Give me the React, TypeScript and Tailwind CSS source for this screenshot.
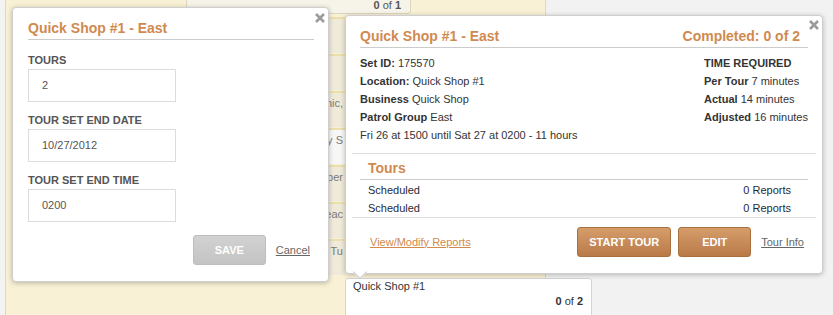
import React from "react";

const orange = "text-[#d08a50]";

const CloseX = () => (
  <svg width="10" height="10" viewBox="0 0 10 10">
    <path d="M1 1 L9 9 M9 1 L1 9" stroke="#9b9b9b" strokeWidth="2.6" strokeLinecap="butt" />
  </svg>
);

// blocks in the hidden calendar column, only their right edge shows
const blocks = [
  { top: 17, text: "", white: false },
  { top: 54, text: "", white: false },
  { top: 91, text: "Mechanic,", white: false },
  { top: 128, text: "Daily S", white: true },
  { top: 165, text: "Super", white: false },
  { top: 202, text: "Beac", white: false },
  { top: 239, text: "Tu", white: false },
];

const Field = ({ label, value, first }: { label: string; value: string; first?: boolean }) => (
  <div className={first ? "mt-[13px]" : "mt-[11px]"}>
    <div className="text-[11px] leading-[14px] font-bold text-[#555] mb-[2px]">{label}</div>
    <div className="w-[148px] h-[33px] border border-[#dcdcdc] bg-white flex items-center pl-[13px] text-[11px] text-[#555]">
      {value}
    </div>
  </div>
);

const InfoRow = ({ label, value }: { label: string; value: string }) => (
  <div className="h-[18px] leading-[18px] whitespace-nowrap">
    <span className="font-bold">{label}</span> {value}
  </div>
);

export default function App() {
  return (
    <div className="relative w-[833px] h-[315px] overflow-hidden bg-[#f2f2f2] font-['Liberation_Sans',Arial,sans-serif] text-[#333]">
      {/* calendar background */}
      <div className="flex h-full">
        <div className="w-[6px] h-full bg-[#f3f3f1] border-r border-[#f0d98c]" />
        <div className="relative w-[540px] h-full bg-[#f9f1d5] border-r border-[#f0d98c]">
          <div className="absolute left-[180px] top-[-20px] w-[225px] h-[34px] bg-[#f6f3e8] border border-[#dcd6c0] rounded-[3px] flex items-end justify-end pr-[9px] pb-[1px] text-[11px] leading-[14px] text-[#555]">
            <span>
              <b>0</b> of <b>1</b>
            </span>
          </div>
          {blocks.map((b) => (
            <div
              key={b.top}
              className={`absolute left-[184px] w-[155px] h-[36px] border-t-2 border-[#ebdfb0] flex justify-end overflow-hidden pr-[2px] pt-[3px] text-[11px] leading-[14px] text-[#7a7a7a] ${
                b.white ? "bg-[#f7f7f5]" : "bg-[#efead9]"
              }`}
              style={{ top: b.top }}
            >
              <span className="whitespace-nowrap">{b.text}</span>
            </div>
          ))}
        </div>
        <div className="flex-1" />
      </div>

      {/* event card below the popover */}
      <div className="absolute left-[345px] top-[278px] w-[247px] h-[50px] bg-white border border-[#d4d4d4] rounded-[3px] px-[7px] text-[11px] leading-[15px] text-[#333]">
        <div>Quick Shop #1</div>
        <div className="text-right pr-[1px]">
          <b>0</b> of <b>2</b>
        </div>
      </div>

      {/* edit dialog */}
      <div className="absolute left-[12px] top-[7px] w-[317px] h-[275px] bg-white border border-[#cfcfcf] rounded-[4px] shadow-[0_1px_5px_rgba(0,0,0,0.25)]">
        <div className="absolute left-[302px] top-[5px]">
          <CloseX />
        </div>
        <div className="pl-[15px] pr-[14px]">
          <div className={`pt-[9px] leading-[22px] text-[14px] font-bold ${orange} border-b border-[#cccccc]`}>
            Quick Shop #1 - East
          </div>
          <Field label="TOURS" value="2" first />
          <Field label="TOUR SET END DATE" value="10/27/2012" />
          <Field label="TOUR SET END TIME" value="0200" />
          <div className="flex justify-end items-center mt-[13px] pr-[4px]">
            <div className="w-[73px] h-[30px] rounded-[3px] border border-[#bdbdbd] bg-gradient-to-b from-[#d2d2d2] to-[#c4c4c4] flex items-center justify-center text-white text-[11px] font-bold">
              SAVE
            </div>
            <span className="ml-[10px] text-[11px] text-[#666] underline">Cancel</span>
          </div>
        </div>
      </div>

      {/* detail popover */}
      <div className="absolute left-[345px] top-[15px] w-[478px] h-[259px] z-10 bg-white border border-[#cfcfcf] rounded-[4px] shadow-[0_1px_5px_rgba(0,0,0,0.25)]">
        <div className="absolute left-[463px] top-[4px]">
          <CloseX />
        </div>
        <div className="absolute left-[9px] bottom-[-4px] w-[10px] h-[10px] rotate-45 bg-white border-r border-b border-[#cfcfcf]" />

        <div className="px-[14px]">
          <div className={`flex justify-between pt-[9px] leading-[22px] text-[14px] font-bold ${orange} border-b border-[#cccccc]`}>
            <span>Quick Shop #1 - East</span>
            <span className="pr-[8px]">Completed: 0 of 2</span>
          </div>
          <div className="flex pt-[6px] pb-[9px] text-[11px]">
            <div className="flex-1">
              <InfoRow label="Set ID:" value="175570" />
              <InfoRow label="Location:" value="Quick Shop #1" />
              <InfoRow label="Business" value="Quick Shop" />
              <InfoRow label="Patrol Group" value="East" />
              <div className="h-[18px] leading-[18px]">Fri 26 at 1500 until Sat 27 at 0200 - 11 hours</div>
            </div>
            <div className="w-[104px]">
              <div className="h-[18px] leading-[18px] font-bold">TIME REQUIRED</div>
              <InfoRow label="Per Tour" value="7 minutes" />
              <InfoRow label="Actual" value="14 minutes" />
              <InfoRow label="Adjusted" value="16 minutes" />
            </div>
          </div>
        </div>

        <div className="mx-[6px] border-t border-[#dddddd]">
          <div className="mx-[8px]">
            <div className={`pt-[4px] pb-[1px] pl-[8px] leading-[20px] text-[14px] font-bold ${orange} border-b border-[#cccccc]`}>
              Tours
            </div>
            <div className="pt-[1px] pl-[8px] pr-[17px] text-[11px] text-[#1f2a38]">
              <div className="flex justify-between h-[18px] leading-[18px]">
                <span>Scheduled</span>
                <span>0 Reports</span>
              </div>
              <div className="flex justify-between h-[18px] leading-[18px]">
                <span>Scheduled</span>
                <span>0 Reports</span>
              </div>
            </div>
          </div>
          <div className="border-t border-[#dddddd] flex items-center pt-[9px] pl-[18px] pr-[12px]">
            <span className={`text-[11px] underline ${orange}`}>View/Modify Reports</span>
            <div className="flex-1" />
            <div className="w-[94px] h-[30px] rounded-[3px] border border-[#a8703f] bg-gradient-to-b from-[#d59d6b] to-[#b97a48] flex items-center justify-center text-white text-[11px] font-bold">
              START TOUR
            </div>
            <div className="ml-[7px] w-[73px] h-[30px] rounded-[3px] border border-[#a8703f] bg-gradient-to-b from-[#d59d6b] to-[#b97a48] flex items-center justify-center text-white text-[11px] font-bold">
              EDIT
            </div>
            <span className="ml-[10px] text-[11px] text-[#666] underline">Tour Info</span>
          </div>
        </div>
      </div>
    </div>
  );
}
